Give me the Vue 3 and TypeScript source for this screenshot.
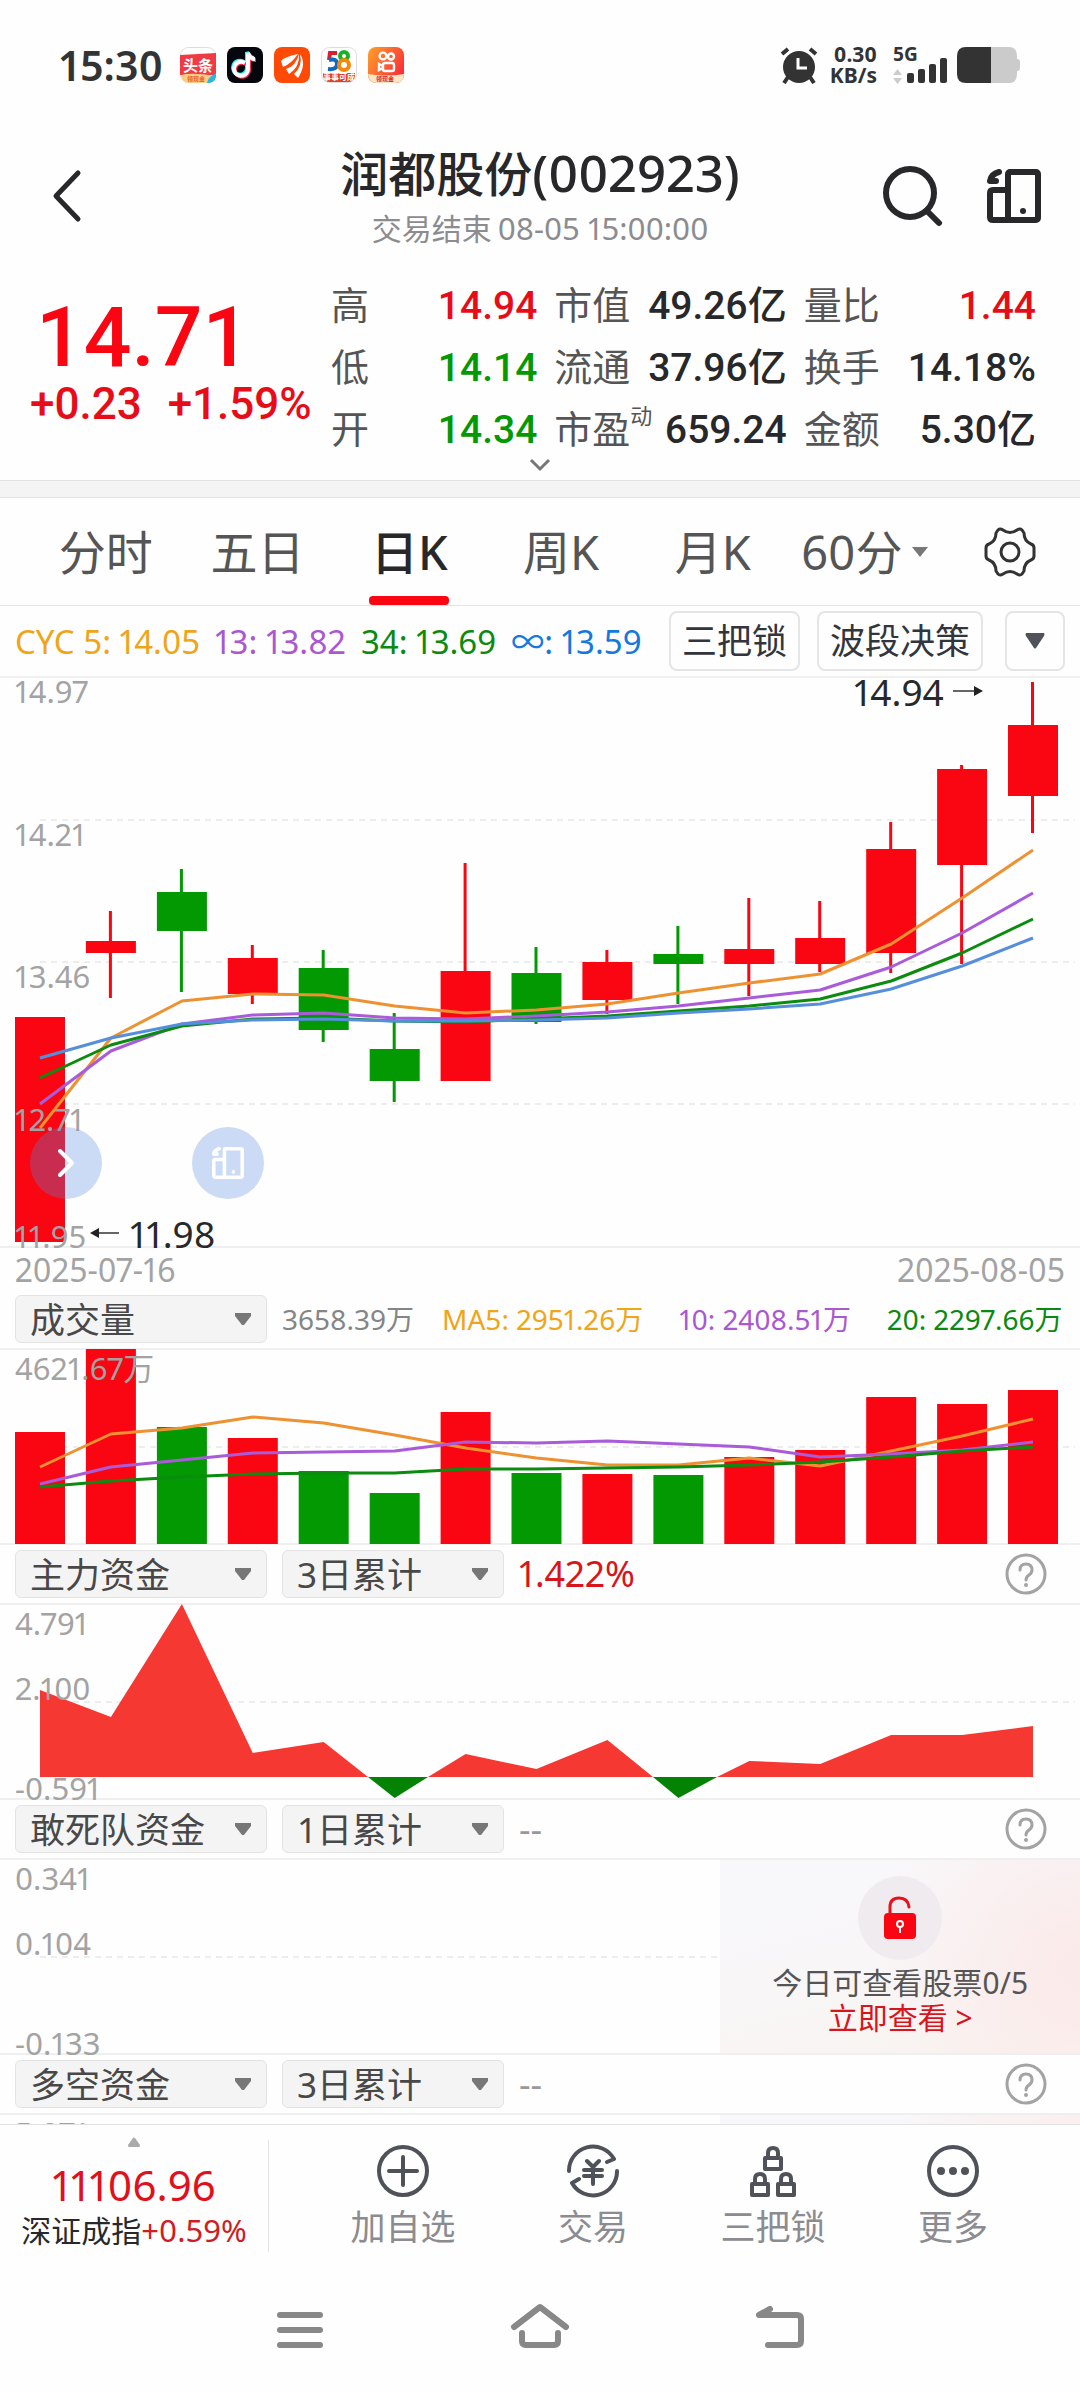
<script setup lang="ts">
import { ref } from 'vue'

type Tone = 'up' | 'down' | 'plain'
interface Quote { label: string; sup?: string; value: string; tone: Tone }
interface Candle { up: boolean; high: number; top: number; bottom: number; low: number }
interface Series { color: string; values: number[] }

const quotes: Quote[] = [
  { label: '高', value: '14.94', tone: 'up' },
  { label: '市值', value: '49.26亿', tone: 'plain' },
  { label: '量比', value: '1.44', tone: 'up' },
  { label: '低', value: '14.14', tone: 'down' },
  { label: '流通', value: '37.96亿', tone: 'plain' },
  { label: '换手', value: '14.18%', tone: 'plain' },
  { label: '开', value: '14.34', tone: 'down' },
  { label: '市盈', sup: '动', value: '659.24', tone: 'plain' },
  { label: '金额', value: '5.30亿', tone: 'plain' },
]

const tabs = ['分时', '五日', '日K', '周K', '月K']
const activeTab = ref('日K')

const legend = [
  { text: 'CYC 5: 14.05', color: '#f0a519' },
  { text: '13: 13.82', color: '#a958d2' },
  { text: '34: 13.69', color: '#0a8a0f' },
  { text: '∞: 13.59', color: '#1478de' },
]

const step = 70.93
const x = (i: number): number => Math.round((40 + i * step) * 10) / 10

const c = (up: boolean, high: number, top: number, bottom: number, low: number): Candle => ({ up, high, top, bottom, low })
const candles: Candle[] = [
  c(true, 339, 339, 564, 564),
  c(true, 233, 263, 275, 320),
  c(false, 191, 214, 253, 314),
  c(true, 267, 280, 316, 326),
  c(false, 272, 290, 352, 364),
  c(false, 335, 371, 403, 424),
  c(true, 185, 293, 403, 403),
  c(false, 269, 295, 344, 346),
  c(true, 272, 284, 322, 336),
  c(false, 248, 276, 286, 326),
  c(true, 220, 271, 286, 318),
  c(true, 223, 260, 286, 294),
  c(true, 144, 171, 275, 295),
  c(true, 87, 91, 187, 286),
  c(true, 4, 47, 118, 155),
]

const costLines: Series[] = [
  { color: '#ee9130', values: [450, 360, 323, 316, 317, 328, 335, 332, 326, 315, 305, 296, 266, 220, 172] },
  { color: '#a95bd9', values: [426, 373, 346, 337, 335, 340, 341, 338, 334, 328, 320, 312, 289, 255, 215] },
  { color: '#0b8b0f', values: [400, 367, 348, 341, 340, 343, 344, 341, 338, 333, 328, 321, 303, 275, 241] },
  { color: '#558fdc', values: [380, 360, 346, 342, 341, 343, 343, 342, 340, 335, 331, 326, 311, 288, 260] },
]

const volumes = [83, 0, 78, 89, 122, 144, 63, 124, 125, 126, 108, 101, 48, 55, 41]
const volumeLines: Series[] = [
  { color: '#ee9130', values: [118, 85, 79, 68, 74, 86, 99, 109, 116, 116, 109, 117, 102, 87, 70] },
  { color: '#a95bd9', values: [135, 118, 111, 104, 103, 102, 93, 94, 92, 95, 98, 108, 105, 101, 93] },
  { color: '#0b8b0f', values: [138, 132, 128, 125, 124, 124, 120, 120, 119, 118, 116, 113, 108, 102, 98] },
]

const points = (values: number[]): string => values.map((v, i) => `${x(i)},${v}`).join(' ')

const priceLabels = [
  { text: '14.97', y: 25 },
  { text: '14.21', y: 168 },
  { text: '13.46', y: 310 },
  { text: '12.71', y: 453 },
  { text: '11.95', y: 570 },
]

const inflow = [
  'M40,173 L40,86 L110.9,113 L181.9,0 L252.8,149 L323.7,138 L368,173 Z',
  'M428,173 L465.6,150 L536.5,165 L607.4,136 L653,173 Z',
  'M717,173 L749.3,157 L820.2,160 L891.2,131 L962.1,131 L1033,122 L1033,173 Z',
]
const outflow = ['M368,173 L394.7,194 L428,173 Z', 'M653,173 L678.4,194 L717,173 Z']

const fundPanels = [
  { id: 'main', name: '主力资金', span: '3日累计', value: '1.422%', labels: ['4.791', '2.100', '-0.591'], locked: false, offer: false },
  { id: 'dare', name: '敢死队资金', span: '1日累计', value: '--', labels: ['0.341', '0.104', '-0.133'], locked: true, offer: true },
  { id: 'bull', name: '多空资金', span: '3日累计', value: '--', labels: ['5.071'], locked: true, offer: false },
]
const labelY = [31, 96, 196]
</script>

<template>
  <div class="app">
    <header class="status">
      <span class="clock">15:30</span>
      <span class="apps">
        <svg viewBox="0 0 36 36" class="app-icon">
          <rect x=".5" y=".5" width="35" height="35" rx="8" fill="#fff" stroke="#ddd" />
          <path d="M0 8 36 6V28H0Z" fill="#f23a45" />
          <path d="M1 28Q12 25 35 29Q34 36 27 36H9Q2 36 1 28Z" fill="#f9cf83" />
          <path d="M36 26V30Q35 36 27 36Q28 30 36 26Z" fill="#25b8e6" />
          <text x="18" y="24" class="glyph" font-size="15">头条</text>
          <text x="16" y="34" class="glyph" font-size="6" style="fill: #e8632c">领现金</text>
        </svg>
        <svg viewBox="0 0 36 36" class="app-icon">
          <rect width="36" height="36" rx="8" fill="#06060f" />
          <g fill="none" stroke-width="4">
            <path d="M18 16a7 7 0 1 0 3 6V6q2 6 7 6" stroke="#25f4ee" transform="translate(-1 -1)" />
            <path d="M18 16a7 7 0 1 0 3 6V6q2 6 7 6" stroke="#fe2c55" transform="translate(1 1)" />
            <path d="M18 16a7 7 0 1 0 3 6V6q2 6 7 6" stroke="#fff" />
          </g>
        </svg>
        <svg viewBox="0 0 36 36" class="app-icon">
          <rect width="36" height="36" rx="8" fill="#fe4a05" />
          <path d="M24 7Q10 10 7 14l2 6Q17 17 24 7ZM25 7Q22 19 12 22l3 5Q26 20 25 7ZM26 7Q29 19 20 27l4 4Q33 17 26 7Z" fill="#fff" />
        </svg>
        <svg viewBox="0 0 36 36" class="app-icon">
          <rect x=".5" y=".5" width="35" height="35" rx="8" fill="#fff" stroke="#ddd" />
          <g fill="none" stroke-width="4">
            <path d="M16 6H9l-1 7" stroke="#d81f2c" />
            <path d="M8 13q8-2 8 4t-9 5" stroke="#1267c4" />
            <circle cx="23" cy="9" r="4" stroke="#19b126" />
            <circle cx="23" cy="18" r="5" stroke="#f58a0a" />
          </g>
          <path d="M2 26H34V29Q33 35 27 35H9Q3 35 2 29Z" fill="#e1401c" />
          <text x="18" y="33" class="glyph" font-size="8">事事可成</text>
        </svg>
        <svg viewBox="0 0 36 36" class="app-icon">
          <defs>
            <linearGradient id="ks" x1="0" y1="0" x2="1" y2=".6">
              <stop offset="0" stop-color="#ffa32a" /><stop offset="1" stop-color="#fb3038" />
            </linearGradient>
          </defs>
          <rect width="36" height="36" rx="8" fill="url(#ks)" />
          <g fill="none" stroke="#fff" stroke-width="2.4">
            <circle cx="15" cy="9" r="3.4" /><circle cx="23" cy="9.500" r="3" />
            <rect x="15" y="16" width="11" height="8" rx="2" /><path d="M15 19l-4-2v6l4-2" />
          </g>
          <path d="M0 27Q18 30 36 27Q36 36 27 36H9Q1 36 0 27Z" fill="#fde6c5" />
          <text x="17" y="34" class="glyph" font-size="6" style="fill: #d8262c">领现金</text>
        </svg>
      </span>
      <span class="spacer"></span>
      <svg viewBox="0 0 38 38" class="alarm" fill="none" stroke="#333" stroke-width="4">
        <circle cx="19" cy="21" r="16" fill="#333" stroke="none" />
        <path d="M2 8 8 3M36 8 30 3M8 31 4 37M30 31 34 37" />
        <path d="M18 12V22H27" stroke="#fff" stroke-width="3" />
      </svg>
      <span class="speed"><span>0.30</span><span>KB/s</span></span>
      <svg viewBox="0 0 56 38" class="signal" fill="#333">
        <text x="0" y="15" class="net">5G</text>
        <path d="M0 29 4.500 23 9 29ZM0 32H9L4.500 38Z" fill="#ccc" />
        <rect x="14" y="27" width="7" height="10" rx="2" />
        <rect x="25" y="23" width="7" height="14" rx="2" />
        <rect x="36" y="18" width="7" height="19" rx="2" />
        <rect x="47" y="12" width="7" height="25" rx="2" />
      </svg>
      <svg viewBox="0 0 63 36" class="battery">
        <path d="M34 0H52Q60 0 60 9V12Q63 12 63 15V21Q63 24 60 24V27Q60 36 52 36H34Z" fill="#cbcbcb" />
        <path d="M9 0H34V36H9Q0 36 0 27V9Q0 0 9 0Z" fill="#333" />
      </svg>
    </header>

    <div class="head">
      <button class="icon-btn back" aria-label="返回">
        <svg viewBox="0 0 30 54" fill="none" stroke="#28282a" stroke-width="5" stroke-linecap="round" stroke-linejoin="round"><path d="M26 4 4 27 26 50" /></svg>
      </button>
      <div class="title">
        <h1>润都股份<span class="code">(002923)</span></h1>
        <p>交易结束<span class="stamp">08-05 15:00:00</span></p>
      </div>
      <div class="tools">
        <button class="icon-btn search" aria-label="搜索">
          <svg viewBox="0 0 62 62" fill="none" stroke="#28282a" stroke-width="6" stroke-linecap="round"><circle cx="28" cy="28" r="24" /><path d="M46 47 57 58" /></svg>
        </button>
        <button class="icon-btn device" aria-label="横屏">
          <svg viewBox="0 0 54 54" fill="none" stroke="#28282a" stroke-width="6" stroke-linejoin="round" stroke-linecap="round">
            <rect x="21" y="3" width="30" height="48" rx="2" /><path d="M21 21H6Q3 21 3 24V48Q3 51 6 51H21" />
            <path d="M12 3Q4 5 3 12H9" /><circle cx="36" cy="42" r="3" fill="#28282a" stroke="none" />
          </svg>
        </button>
      </div>
    </div>

    <section class="quote">
      <div class="price">
        <strong>14.71</strong>
        <div class="change"><span>+0.23</span><span>+1.59%</span></div>
      </div>
      <dl class="facts">
        <div v-for="q in quotes" :key="q.label" class="fact">
          <dt>{{ q.label }}<sup v-if="q.sup">{{ q.sup }}</sup></dt>
          <dd :class="q.tone">{{ q.value }}</dd>
        </div>
      </dl>
      <svg class="more-arrow" viewBox="0 0 24 14" fill="none" stroke="#777" stroke-width="3"><path d="M3 2 12 11 21 2" /></svg>
    </section>
    <div class="band"></div>

    <nav class="tabs">
      <button v-for="t in tabs" :key="t" :class="{ active: t === activeTab }" @click="activeTab = t"><span>{{ t }}</span></button>
      <button class="period">60分<svg viewBox="0 0 16 10" class="tri"><path d="M0 0H16L8 10Z" fill="#777" /></svg></button>
      <button aria-label="设置">
        <svg viewBox="0 0 52 50" class="gear" fill="none" stroke="#333" stroke-width="3" stroke-linejoin="round">
          <path d="M14 3Q16 1 19 3Q26 8 33 3Q36 1 38 3L40 6Q40 14 47 17Q50 18 50 21V29Q50 32 47 33Q40 36 40 44L38 47Q36 49 33 47Q26 42 19 47Q16 49 14 47L12 44Q12 36 5 33Q2 32 2 29V21Q2 18 5 17Q12 14 12 6Z" />
          <circle cx="26" cy="25" r="9" />
        </svg>
      </button>
    </nav>

    <main class="body">
      <div class="indicator">
        <div class="legend"><span v-for="l in legend" :key="l.text" :style="{ color: l.color }">{{ l.text }}</span></div>
        <button class="chip">三把锁</button>
        <button class="chip">波段决策</button>
        <button class="chip drop" aria-label="展开"><svg viewBox="0 0 20 16" class="tri-lg"><path d="M1 0H19Q20 1 19 3L11 15Q10 16 9 15L1 3Q0 1 1 0Z" fill="#50525a" /></svg></button>
      </div>

      <div class="canvas">
        <svg viewBox="0 0 1080 570" class="plot">
          <path d="M40 142H1075M40 284H1075M40 426H1075" class="grid" />
          <path d="M0 569H1080" class="rule" />
          <g v-for="(k, i) in candles" :key="i" :fill="k.up ? '#fa0512' : '#029902'">
            <rect :x="x(i) - 2" :y="k.high" width="3" :height="k.low - k.high" />
            <rect :x="x(i) - 25" :y="k.top" width="50" :height="k.bottom - k.top" />
          </g>
          <text v-for="l in priceLabels" :key="l.text" x="15" :y="l.y" class="axis">{{ l.text }}</text>
          <polyline v-for="s in costLines" :key="s.color" :points="points(s.values)" :stroke="s.color" class="line" />
          <text x="854" y="28" class="mark">14.94</text>
          <path d="M953 13H976" stroke="#333" stroke-width="1.500" /><path d="M974 8 983 13 974 18Z" fill="#222" />
          <text x="130" y="570" class="mark">11.98</text>
          <path d="M97 555H119" stroke="#333" stroke-width="1.500" /><path d="M99 550 90 555 99 560Z" fill="#222" />
        </svg>
        <button class="bubble first" aria-label="收起">
          <svg viewBox="0 0 18 30" fill="none" stroke="#fff" stroke-width="4" stroke-linecap="round" stroke-linejoin="round" class="chev"><path d="M3 3 15 15 3 27" /></svg>
        </button>
        <button class="bubble second" aria-label="横屏">
          <svg viewBox="0 0 54 54" class="dev" fill="none" stroke="#fff" stroke-width="6" stroke-linejoin="round" stroke-linecap="round">
            <rect x="21" y="3" width="30" height="48" rx="2" /><path d="M21 21H6Q3 21 3 24V48Q3 51 6 51H21" />
            <path d="M12 3Q4 5 3 12H9" /><circle cx="36" cy="42" r="3" fill="#fff" stroke="none" />
          </svg>
        </button>
      </div>
      <div class="dates"><span>2025-07-16</span><span>2025-08-05</span></div>

      <div class="panel-head">
        <label class="pick wide"><select aria-label="指标"><option>成交量</option></select><svg viewBox="0 0 16 12"><path d="M0 0H16V3L9 12H7L0 3Z" fill="#777" /></svg></label>
        <div class="averages">
          <span class="now">3658.39万</span><span class="ma5">MA5: 2951.26万</span><span class="ma10">10: 2408.51万</span><span class="ma20">20: 2297.66万</span>
        </div>
      </div>
      <div class="canvas">
        <svg viewBox="0 0 1080 195" class="plot">
          <path d="M40 98H1075" class="grid" />
          <path d="M0 0H1080M0 195H1080" class="rule" />
          <rect v-for="(v, i) in volumes" :key="i" :x="x(i) - 25" :y="v" width="50" :height="195 - v" :fill="candles[i].up ? '#fa0512' : '#029902'" />
          <text x="15" y="31" class="axis">4621.67万</text>
          <polyline v-for="s in volumeLines" :key="s.color" :points="points(s.values)" :stroke="s.color" class="line" />
        </svg>
      </div>

      <template v-for="p in fundPanels" :key="p.id">
        <div class="panel-head">
          <label class="pick wide"><select aria-label="指标"><option>{{ p.name }}</option></select><svg viewBox="0 0 16 12"><path d="M0 0H16V3L9 12H7L0 3Z" fill="#777" /></svg></label>
          <label class="pick"><select aria-label="周期"><option>{{ p.span }}</option></select><svg viewBox="0 0 16 12"><path d="M0 0H16V3L9 12H7L0 3Z" fill="#777" /></svg></label>
          <span class="total" :class="{ none: p.locked }">{{ p.value }}</span>
          <button class="icon-btn help" aria-label="帮助">
            <svg viewBox="0 0 42 42" fill="none" stroke="#a3a3a3" stroke-width="3" stroke-linecap="round">
              <circle cx="21" cy="21" r="19" /><path d="M15 17Q15 11 21 11T27 17Q27 20 24 22T21 27" /><circle cx="21" cy="32" r="2" fill="#a3a3a3" stroke="none" />
            </svg>
          </button>
        </div>
        <div class="canvas">
          <svg viewBox="0 0 1080 195" class="plot">
            <path d="M40 98H1075" class="grid" />
            <path d="M0 0H1080M0 195H1080" class="rule" />
            <template v-if="!p.locked">
              <path v-for="d in inflow" :key="d" :d="d" fill="#f53832" />
              <path v-for="d in outflow" :key="d" :d="d" fill="#038203" />
            </template>
            <text v-for="(l, i) in p.labels" :key="l" x="15" :y="labelY[i]" class="axis">{{ l }}</text>
          </svg>
          <div v-if="p.locked" class="lock">
            <template v-if="p.offer">
              <span class="lock-disc">
                <svg viewBox="0 0 34 44" fill="none"><path d="M7 18V11Q7 2 16 2T26 11" stroke="#e8101c" stroke-width="3" stroke-linecap="round" /><rect x="1" y="17" width="32" height="26" rx="4" fill="#fa0512" /><circle cx="17" cy="28" r="3" stroke="#fff" stroke-width="2" /><path d="M17 31V37" stroke="#fff" stroke-width="2" /></svg>
              </span>
              <span>今日可查看股票0/5</span>
              <a href="#">立即查看 &gt;</a>
            </template>
          </div>
        </div>
      </template>
    </main>

    <footer class="dock">
      <div class="index">
        <svg viewBox="0 0 12 10"><path d="M5 1Q6 0 7 1L12 8Q12 10 11 10H1Q0 10 0 8Z" fill="#aaa" /></svg>
        <strong>11106.96</strong>
        <span>深证成指<em>+0.59%</em></span>
      </div>
      <div class="actions">
        <button>
          <svg viewBox="0 0 54 54" fill="none" stroke="#50525a" stroke-width="4" stroke-linecap="round"><circle cx="27" cy="27" r="24" /><path d="M27 13V41M13 27H41" /></svg>
          <span>加自选</span>
        </button>
        <button>
          <svg viewBox="0 0 54 54" fill="none" stroke="#50525a" stroke-width="4" stroke-linecap="round" stroke-linejoin="round">
            <path d="M3 27A24 24 0 0 1 48 15L41 18M51 27A24 24 0 0 1 6 39L13 35M21 17 27 23 33 17M27 23V40M18 26H36M18 32H36" />
          </svg>
          <span>交易</span>
        </button>
        <button>
          <svg viewBox="0 0 54 54" fill="none" stroke="#50525a" stroke-width="4" stroke-linejoin="round">
            <rect x="19" y="14" width="16" height="11" /><path d="M22 14V9Q22 4 27 4T32 9V14" />
            <rect x="6" y="40" width="16" height="11" /><path d="M9 40V35Q9 30 14 30T19 35V40" />
            <rect x="32" y="40" width="16" height="11" /><path d="M35 40V35Q35 30 40 30T45 35V40" />
          </svg>
          <span>三把锁</span>
        </button>
        <button>
          <svg viewBox="0 0 54 54" fill="none" stroke="#50525a" stroke-width="4"><circle cx="27" cy="27" r="24" /><g fill="#50525a" stroke="none"><circle cx="15" cy="27" r="4" /><circle cx="27" cy="27" r="4" /><circle cx="39" cy="27" r="4" /></g></svg>
          <span>更多</span>
        </button>
      </div>
    </footer>

    <div class="system">
      <button aria-label="最近任务"><svg viewBox="0 0 60 50" fill="none" stroke="#888" stroke-width="6" stroke-linecap="round"><path d="M10 10H50M10 25H50M10 40H50" /></svg></button>
      <button aria-label="主页"><svg viewBox="0 0 60 50" fill="none" stroke="#888" stroke-width="6" stroke-linecap="round" stroke-linejoin="round"><path d="M4 22 30 2 56 22M12 28V36Q12 40 16 40H44Q48 40 48 36V28" /></svg></button>
      <button aria-label="后退"><svg viewBox="0 0 60 50" fill="none" stroke="#888" stroke-width="6" stroke-linecap="round" stroke-linejoin="round"><path d="M20 4 9 10H47Q51 10 51 14V36Q51 40 47 40H18" /></svg></button>
    </div>
  </div>
</template>

<style>
body { margin: 0; background: #fefefe; }
</style>

<style scoped>
.app {
  display: flex;
  flex-direction: column;
  height: 100vh;
  background: #fefefe;
  color: #28282a;
  font-family: "Noto Sans", "Noto Sans CJK SC", sans-serif;
  font-variant-numeric: proportional-nums;
  font-size: 32px;
  overflow: hidden;
}
button { border: 0; padding: 0; margin: 0; background: none; font: inherit; color: inherit; }
svg { display: block; }
h1, p, dl, dd { margin: 0; }

.status { display: flex; align-items: center; height: 130px; padding: 0 60px; flex: none; box-sizing: border-box; }
.clock { font-size: 41px; line-height: 48px; font-weight: 600; color: #333; }
.apps { display: flex; gap: 11px; margin-left: 17px; }
.app-icon { width: 36px; height: 36px; }
.glyph { font-family: "Noto Sans CJK SC", sans-serif; font-weight: 700; fill: #fff; text-anchor: middle; }
.spacer { flex: 1; }
.alarm { width: 38px; height: 38px; }
.speed { display: flex; flex-direction: column; align-items: flex-end; margin-left: 12px; font-weight: 700; font-size: 21px; line-height: 21px; color: #333; }
.signal { width: 56px; height: 38px; margin-left: 16px; }
.net { font-size: 19px; font-weight: 700; }
.battery { width: 63px; height: 36px; margin-left: 8px; }

.head { display: grid; grid-template-columns: 220px 1fr 220px; align-items: center; height: 124px; padding-top: 7px; box-sizing: border-box; flex: none; }
.icon-btn { display: block; }
.back { margin-left: 52px; }
.back svg { width: 30px; height: 54px; }
.title { text-align: center; }
h1 { font-size: 48px; line-height: 64px; font-weight: 500; white-space: nowrap; }
.code { font-size: 51px; }
.title p { font-size: 30px; line-height: 44px; color: #8c8c90; }
.stamp { margin-left: 6px; font-size: 31px; }
.tools { display: flex; justify-content: flex-end; align-items: center; gap: 43px; padding-right: 39px; }
.search svg { width: 62px; height: 62px; }
.device svg { width: 54px; height: 54px; }

.quote { position: relative; display: flex; height: 226px; flex: none; font-family: Roboto, "Noto Sans CJK SC", sans-serif; font-variant-numeric: tabular-nums; }
.price { width: 331px; padding: 32px 0 0 30px; box-sizing: border-box; color: #fa0512; }
.price strong { display: block; padding-left: 6px; font-size: 84px; line-height: 104px; font-weight: 480; }
.change { display: flex; gap: 26px; font-size: 44px; line-height: 28px; color: #e80c18; font-weight: 480; white-space: nowrap; }
.facts { flex: 1; display: grid; grid-template-columns: 206fr 232fr 232fr; grid-auto-rows: 62px; column-gap: 17px; padding: 21px 44px 0 0; }
.fact { display: flex; justify-content: space-between; align-items: center; line-height: 62px; white-space: nowrap; }
.fact dt { font-size: 38px; color: #555; display: flex; }
.fact sup { font-size: 22px; line-height: 36px; vertical-align: top; }
.fact dd { font-size: 39px; font-weight: 480; }
.up { color: #e80c18; }
.down { color: #029902; }
.more-arrow { position: absolute; left: 50%; bottom: 8px; width: 24px; height: 14px; margin-left: -12px; }
.band { height: 18px; flex: none; box-sizing: border-box; background: #f4f4f4; border: solid #e2e2e2; border-width: 1px 0; }

.tabs { display: grid; grid-template-columns: repeat(6, 152fr) 140fr; height: 108px; flex: none; padding-left: 30px; box-sizing: border-box; border-bottom: 1px solid #e4e4e4; }
.tabs button { position: relative; display: flex; align-items: center; justify-content: center; font-size: 47px; line-height: 60px; color: #555; white-space: nowrap; }
.tabs .active { color: #28282a; font-weight: 500; }
.tabs .active::after { content: ""; position: absolute; left: 50%; bottom: 0; width: 80px; height: 9px; margin-left: -40px; border-radius: 4px; background: #fa0512; }
.tri { width: 16px; height: 10px; margin-left: 9px; }
.gear { width: 52px; height: 50px; }

.body { flex: 1; min-height: 0; overflow: hidden; }
.indicator { display: flex; align-items: center; height: 72px; box-sizing: border-box; padding: 0 15px; border-bottom: 2px solid #f0f0f0; }
.legend { flex: 1; display: flex; gap: 15px; font-size: 33px; line-height: 40px; padding-top: 2px; white-space: nowrap; }
.chip { height: 60px; padding: 0 11px; margin-left: 17px; border: 2px solid #e5e5e5; border-radius: 8px; font-size: 35px; line-height: 50px; color: #33353d; white-space: nowrap; }
.drop { margin-left: 22px; padding: 0 18px; }
.tri-lg { width: 20px; height: 16px; }

.canvas { position: relative; }
.plot { width: 100%; overflow: visible; }
.grid { stroke: #ededed; stroke-width: 2; stroke-dasharray: 6 5; }
.rule { stroke: #efefef; stroke-width: 2; }
.line { fill: none; stroke-width: 3; stroke-linejoin: round; }
.axis { font-size: 31px; fill: #a3a3a3; }
.mark { font-size: 37px; fill: #28282a; }
.bubble { position: absolute; top: 449px; width: 72px; height: 72px; border-radius: 50%; background: rgba(85, 138, 225, 0.3); display: flex; align-items: center; justify-content: center; }
.first { left: 30px; }
.second { left: 192px; }
.chev { width: 18px; height: 30px; }
.dev { width: 32px; height: 32px; }
.dates { display: flex; justify-content: space-between; padding: 0 15px; height: 41px; font-size: 32px; line-height: 44px; color: #a3a3a3; }

.panel-head { display: flex; align-items: center; height: 60px; padding: 0 15px; }
.pick { position: relative; width: 222px; margin-right: 15px; }
.pick.wide { width: 252px; }
.pick select { appearance: none; width: 100%; height: 48px; padding: 0 14px; border: 1px solid #e3e3e3; border-radius: 6px; background: #f4f4f4; font-family: inherit; font-size: 35px; color: #484848; }
.pick svg { position: absolute; right: 16px; top: 18px; width: 16px; height: 12px; pointer-events: none; }
.averages { flex: 1; display: flex; gap: 28px; font-size: 28px; line-height: 40px; white-space: nowrap; }
.now { color: #858585; }
.ma5 { color: #f0a519; margin-right: 8px; }
.ma10 { color: #a958d2; margin-right: 8px; }
.ma20 { color: #0a8a0f; }
.total { flex: 1; font-size: 36px; line-height: 48px; color: #d8141c; }
.total.none { color: #999; }
.help { margin-right: 18px; }
.help svg { width: 42px; height: 42px; }

.lock { position: absolute; right: 0; top: 1px; bottom: 1px; width: 33.3%; display: flex; flex-direction: column; align-items: center; padding-top: 16px; box-sizing: border-box; font-size: 30px; line-height: 35px; color: #555; background: radial-gradient(circle at 100% 55%, #fbe9e9 0, rgba(251, 236, 234, 0) 55%), linear-gradient(165deg, #f8f8fb 0, #f8f6f7 50%, #f9f3ee 100%); }
.lock-disc { display: flex; align-items: center; justify-content: center; width: 84px; height: 84px; margin-bottom: 5px; border-radius: 50%; background: #f0ebef; }
.lock-disc svg { width: 34px; height: 44px; }
.lock a { color: #d8141c; text-decoration: none; }

.dock { display: flex; height: 144px; flex: none; border-top: 1px solid #e2e2e2; }
.index { width: 269px; margin: 15px 0 17px; box-sizing: border-box; border-right: 1px solid #e2e2e2; display: flex; flex-direction: column; align-items: center; white-space: nowrap; }
.index svg { width: 12px; height: 10px; margin-top: -3px; }
.index strong { margin-top: 14px; font-size: 42px; line-height: 48px; font-weight: 400; color: #e0101c; }
.index span { font-size: 30px; line-height: 42px; }
.index em { font-style: normal; font-size: 31px; color: #d01c24; }
.actions { flex: 1; display: grid; grid-template-columns: 190fr 190fr 170fr 190fr; padding: 0 32px 0 39px; }
.actions button { display: flex; flex-direction: column; align-items: center; padding-top: 19px; font-size: 35px; line-height: 52px; color: #8c8c90; }
.actions svg { width: 54px; height: 54px; margin-bottom: 3px; }

.system { display: flex; justify-content: center; gap: 180px; height: 123px; flex: none; }
.system button { width: 60px; display: flex; justify-content: center; align-items: flex-start; padding-top: 36px; }
.system svg { width: 60px; height: 50px; overflow: visible; }
</style>
